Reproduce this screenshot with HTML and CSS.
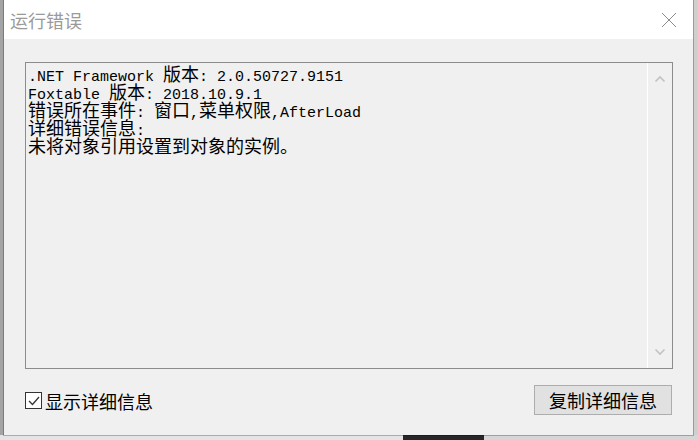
FILE: index.html
```html
<!DOCTYPE html>
<html lang="zh-CN">

<head>
  <meta charset="UTF-8">
  <meta name="viewport" content="width=device-width, initial-scale=1.0">
  <title>运行错误</title>
  <link rel="stylesheet" href="styles.css">
</head>

<body>
  <div class="window">
    <div class="titlebar">
      <span class="title">运行错误</span>
      <span class="close">
        <svg width="16" height="16" viewBox="0 0 16 16">
          <path d="M1 1 L15 15 M15 1 L1 15" stroke="#8a8a8a" stroke-width="1" fill="none" />
        </svg>
      </span>
    </div>
    <div class="content">
      <div class="textbox">
        <div class="log">
          <div class="line">.NET Framework <span class="zh">版本</span>: 2.0.50727.9151</div>
          <div class="line">Foxtable <span class="zh">版本</span>: 2018.10.9.1</div>
          <div class="line"><span class="zh">错误所在事件</span>: <span class="zh">窗口</span>,<span class="zh">菜单权限</span>,AfterLoad</div>
          <div class="line"><span class="zh">详细错误信息</span>:</div>
          <div class="line"><span class="zh">未将对象引用设置到对象的实例。</span></div>
        </div>
        <div class="scrollbar">
          <svg width="12" height="8" viewBox="0 0 12 8">
            <path d="M1.5 6.5 L6 2 L10.5 6.5" stroke="#c2c2c2" stroke-width="1.6" fill="none" />
          </svg>
          <svg width="12" height="8" viewBox="0 0 12 8">
            <path d="M1.5 1.5 L6 6 L10.5 1.5" stroke="#c2c2c2" stroke-width="1.6" fill="none" />
          </svg>
        </div>
      </div>
      <div class="footer">
        <label class="check">
          <span class="box">
            <svg width="14" height="14" viewBox="0 0 14 14">
              <path d="M2 7 L5.5 10.5 L12 3" stroke="#333" stroke-width="1.3" fill="none" />
            </svg>
          </span>
          显示详细信息
        </label>
        <div class="btn">复制详细信息</div>
      </div>
    </div>
  </div>
</body>

</html>
```

FILE: styles.css
```css
html,
body {
  margin: 0;
  width: 698px;
  height: 440px;
  overflow: hidden;
}

body {
  background:
    linear-gradient(to right, #e4e4e4 403px, #262626 403px, #262626 484px, #d6d6d6 484px) bottom / 100% 5px no-repeat,
    linear-gradient(to right, #a4a4a4 4px, transparent 4px),
    #cfcfcf;
  font-family: "Noto Sans CJK SC", sans-serif;
}

.window {
  margin-left: 4px;
  width: 689px;
  height: 435px;
  background: #f0f0f0;
  box-shadow: 0 0 0 1px rgba(0, 0, 0, .25);
  display: flex;
  flex-direction: column;
}

.titlebar {
  height: 39px;
  flex-shrink: 0;
  background: #fff;
  display: flex;
  align-items: center;
  justify-content: space-between;
  padding-left: 6px;
}

.title {
  font-size: 18px;
  color: #9a9a9a;
  line-height: 1;
}

.close {
  width: 46px;
  height: 39px;
  display: flex;
  align-items: center;
  justify-content: center;
  margin-right: 1px;
}

.content {
  flex: 1;
  padding: 23px 20px 0 21px;
  display: flex;
  flex-direction: column;
}

.textbox {
  height: 307px;
  box-sizing: border-box;
  border: 1px solid #8c8c8c;
  display: flex;
}

.log {
  flex: 1;
  padding: 1px 2px;
  font-family: "Liberation Mono", monospace;
  font-size: 15px;
  color: #000;

  .line {
    height: 18px;
    line-height: 18px;
    white-space: pre;
  }

  .zh {
    font-family: "Noto Sans CJK SC", sans-serif;
    font-size: 18px;
    line-height: 18px;
  }
}

.scrollbar {
  width: 24px;
  border-left: 1px solid #fff;
  display: flex;
  flex-direction: column;
  justify-content: space-between;
  align-items: center;
  padding: 12px 0 12px;
}

.footer {
  margin-top: 15px;
  height: 31px;
  display: flex;
  align-items: center;
  justify-content: space-between;
}

.check {
  display: flex;
  align-items: center;
  gap: 3px;
  font-size: 18px;
  color: #000;
  margin-top: 2px;

  .box {
    width: 17px;
    height: 17px;
    box-sizing: border-box;
    border: 1px solid #333;
    background: #fff;
    display: flex;
    align-items: center;
    justify-content: center;
  }
}

.btn {
  width: 138px;
  height: 30px;
  box-sizing: border-box;
  border: 1px solid #adadad;
  background: #e1e1e1;
  font-size: 18px;
  color: #000;
  display: flex;
  align-items: center;
  justify-content: center;
  margin-right: 1px;
}
```
